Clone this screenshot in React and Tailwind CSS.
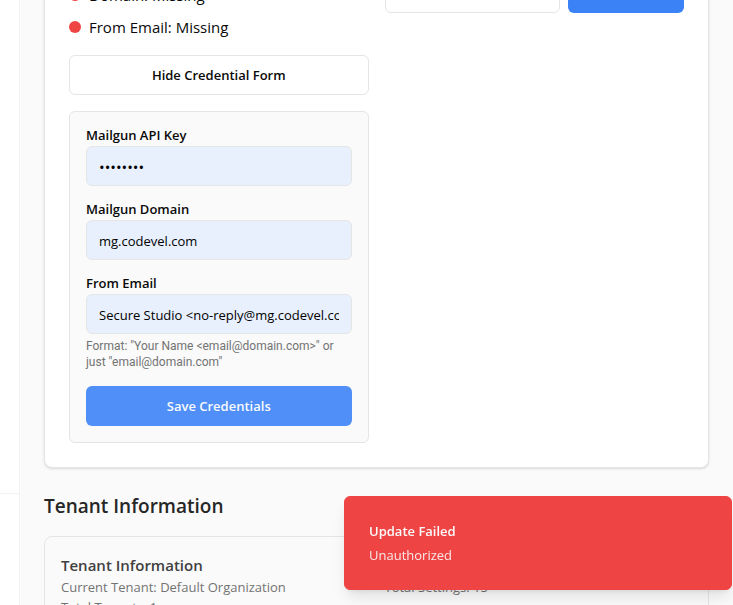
import React from "react";

const inputClass =
  "h-10 w-full rounded-md border border-[#e5e5e5] px-3 pt-px text-black outline-none";

function Status({ label }) {
  return (
    <li className="flex items-center gap-2">
      <span className="size-3 shrink-0 rounded-full bg-[#ef4444]" />
      <span>{label}</span>
    </li>
  );
}

function Field({ id, label, type = "text", value, children }) {
  const size = type === "password" ? "text-[15px]" : "text-[13px]";
  return (
    <div className="flex flex-col gap-1">
      <label htmlFor={id} className="text-[13px] leading-[14px] font-semibold">
        {label}
      </label>
      <input id={id} type={type} defaultValue={value} className={`${inputClass} ${size} bg-[#e8f0fe]`} />
      {children}
    </div>
  );
}

function CredentialForm() {
  return (
    <form className="flex flex-col gap-4 rounded-md border border-[#e5e5e5] bg-[#fafafa] p-4">
      <Field id="api-key" label="Mailgun API Key" type="password" value="password" />
      <Field id="domain" label="Mailgun Domain" value="mg.codevel.com" />
      <Field id="from" label="From Email" value="Secure Studio <no-reply@mg.codevel.com>">
        <p className="font-[Roboto,sans-serif] text-xs leading-4 text-[#737373]">
          Format: "Your Name &lt;email@domain.com&gt;" or
          <br />
          just "email@domain.com"
        </p>
      </Field>
      <button type="button" className="h-10 rounded-md bg-[#4f8ff7] pt-px text-[13px] font-semibold text-[#f8fafc]">
        Save Credentials
      </button>
    </form>
  );
}

function Toast() {
  return (
    <div
      role="alert"
      className="fixed right-px bottom-[15px] flex w-[388px] max-w-full flex-col gap-1 rounded-md border border-[#ef4444] bg-[#ef4444] p-6 text-[13px] leading-5 text-[#fafafa] shadow-lg"
    >
      <p className="font-semibold">Update Failed</p>
      <p className="opacity-90">Unauthorized</p>
    </div>
  );
}

export default function App() {
  return (
    <div className="flex h-screen overflow-hidden bg-[#fafafa] font-['Open_Sans','Noto_Sans',sans-serif] text-[#0a0a0a]">
      <aside className="flex w-5 shrink-0 flex-col border-r border-[#f3f3f3] bg-white">
        <div className="flex-1 border-b border-[#f3f3f3]" />
        <div className="h-[111px]" />
      </aside>
      <main className="-mt-[52px] flex min-w-0 flex-1 flex-col gap-6 px-6">
        <section className="grid grid-cols-2 gap-4 rounded-lg border border-[#e5e5e5] bg-white p-6 shadow-sm">
          <div className="flex flex-col gap-4 pt-[10px]">
            <ul className="flex flex-col gap-2 text-[15px] leading-6">
              <Status label="Domain: Missing" />
              <Status label="From Email: Missing" />
            </ul>
            <button type="button" className="h-10 rounded-md border border-[#e5e5e5] bg-white pt-px text-[13px] font-semibold">
              Hide Credential Form
            </button>
            <CredentialForm />
          </div>
          <div className="flex items-start gap-2">
            <input aria-label="Email" className={`${inputClass} min-w-0 flex-1 bg-white text-[13px]`} />
            <button type="button" className="h-10 w-[116px] rounded-md bg-[#3b82f6] text-[13px] font-semibold text-[#f8fafc]">
              Update Email
            </button>
          </div>
        </section>
        <section className="flex flex-col gap-4">
          <h2 className="text-[19px] leading-7 font-semibold text-[#262626]">Tenant Information</h2>
          <div className="grid grid-cols-2 gap-4 rounded-lg border border-[#e5e5e5] p-4 text-[13px] leading-5 text-[#737373]">
            <div>
              <h3 className="text-[15px] leading-6 font-semibold text-[#404040]">Tenant Information</h3>
              <p>Current Tenant: Default Organization</p>
              <p>Total Tenants: 1</p>
            </div>
            <div className="pt-6">
              <p>Total Settings: 15</p>
            </div>
          </div>
        </section>
      </main>
      <Toast />
    </div>
  );
}
